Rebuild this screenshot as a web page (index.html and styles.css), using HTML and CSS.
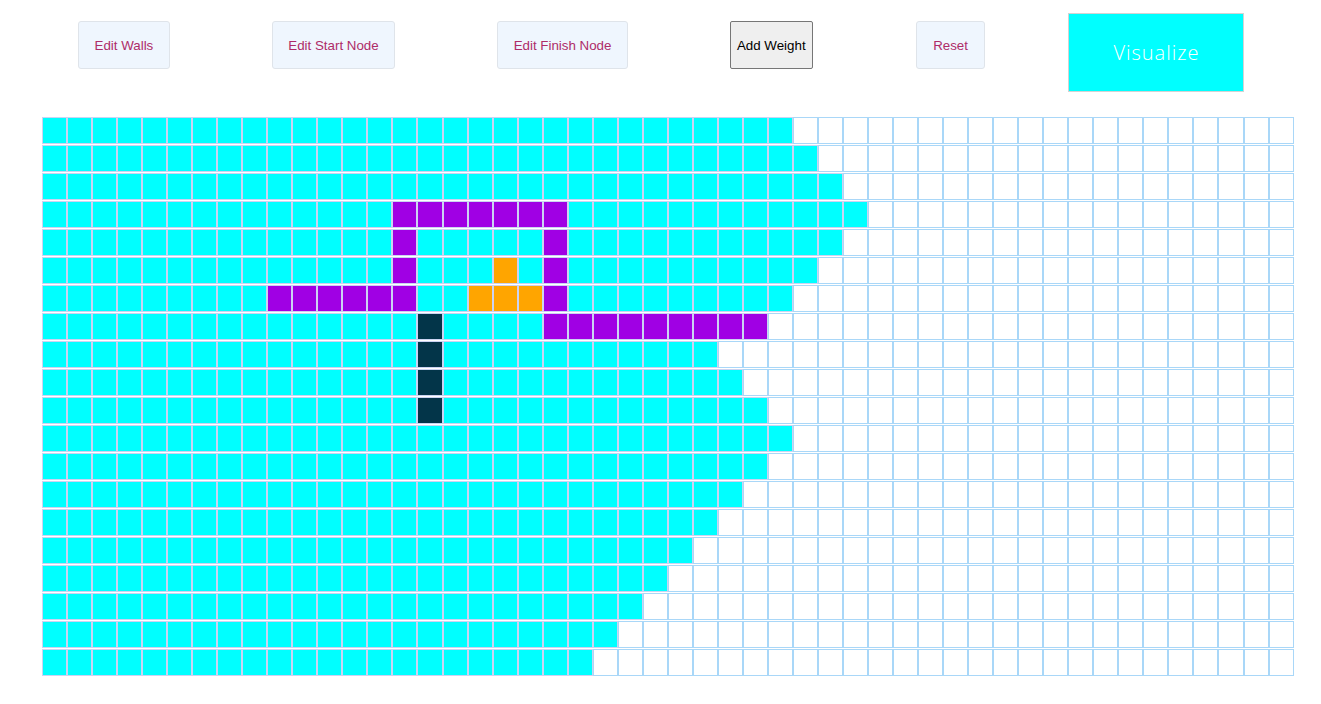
FILE: index.html
```html
<!DOCTYPE html>
<html lang="en">

<head>
    <meta charset="UTF-8">
    <meta name="viewport" content="width=device-width, initial-scale=1.0">
    <title>Pathfinding Visualizer</title>
    <link rel="stylesheet" href="styles.css">
</head>

<body>
    <header class="toolbar">
        <button class="btn">Edit Walls</button>
        <button class="btn">Edit Start Node</button>
        <button class="btn">Edit Finish Node</button>
        <button class="btn btn-plain">Add Weight</button>
        <button class="btn btn-reset">Reset</button>
        <button class="btn-visualize">Visualize</button>
    </header>
    <main class="grid" id="grid"></main>
    <script>
        const ROWS = 20;
        const COLS = 50;

        // how far the visited area reaches on each row (last visited column)
        let visitedTo = [29, 30, 31, 32, 31, 30, 29, 28, 26, 27, 28, 29, 28, 27, 26, 25, 24, 23, 22, 21];

        // walls
        let walls = [
            [3, 14], [3, 15], [3, 16], [3, 17], [3, 18], [3, 19], [3, 20],
            [4, 14], [4, 20],
            [5, 14], [5, 20],
            [6, 9], [6, 10], [6, 11], [6, 12], [6, 13], [6, 14], [6, 20],
            [7, 20], [7, 21], [7, 22], [7, 23], [7, 24], [7, 25], [7, 26], [7, 27], [7, 28]
        ];

        // weights
        let weights = [[5, 18], [6, 17], [6, 18], [6, 19]];

        // shortest path
        let path = [[7, 15], [8, 15], [9, 15], [10, 15]];

        function mark(list, cls) {
            list.forEach(([r, c]) => {
                cells[r][c].classList.add(cls);
            });
        }

        let grid = document.getElementById("grid");
        let cells = [];
        for (let r = 0; r < ROWS; r++) {
            let row = document.createElement("div");
            row.className = "row";
            cells.push([]);
            for (let c = 0; c < COLS; c++) {
                let cell = document.createElement("div");
                cell.className = "node";
                if (c <= visitedTo[r]) {
                    cell.classList.add("visited");
                }
                row.append(cell);
                cells[r].push(cell);
            }
            grid.append(row);
        }

        mark(walls, "wall");
        mark(weights, "weight");
        mark(path, "path");
    </script>
</body>

</html>
```

FILE: styles.css
```css
html,
body {
    margin: 0;
    background-color: #ffffff;
}

body {
    font-family: "Liberation Sans", Arial, sans-serif;
}

.toolbar {
    display: flex;
    align-items: flex-start;
    padding: 13px 0 0 78px;
    height: 79px;
}

.btn {
    height: 48px;
    margin-top: 8px;
    margin-right: 102px;
    padding: 0 15.5px;
    font-family: "Liberation Sans", Arial, sans-serif;
    font-size: 13.333px;
    color: #ae2c68;
    background-color: #eff6fe;
    border: 1px solid #dfe4ea;
    border-radius: 3px;
}

.btn-plain {
    padding: 0 6px;
    color: #000000;
    background-color: #efefef;
    border: 1px solid #767676;
    border-radius: 2px;
}

.btn-reset {
    padding: 0 16.5px;
    margin-left: 1px;
    margin-right: 83px;
}

.btn-visualize {
    width: 176px;
    height: 79px;
    font-family: "Open Sans", sans-serif;
    font-size: 20px;
    font-weight: 300;
    letter-spacing: 1px;
    color: #ffffff;
    background-color: #00ffff;
    border: 1px solid #d3d3d3;
    border-radius: 0;
}

.grid {
    display: flex;
    flex-direction: column;
    gap: 1px;
    margin: 25px 0 0 42px;
}

.row {
    display: flex;
}

.node {
    width: 25.04px;
    height: 27px;
    box-sizing: border-box;
    border: 1px solid #a9d7f8;
    background-color: #ffffff;
}

.visited {
    background-color: #00ffff;
    border-color: #cbd3f2;
}

.wall {
    background-color: #a000e4;
    border-color: #cbd3f2;
}

.weight {
    background-color: #ffa500;
    border-color: #cbd3f2;
}

.path {
    background-color: #033549;
    border-color: #cbd3f2;
}
```
